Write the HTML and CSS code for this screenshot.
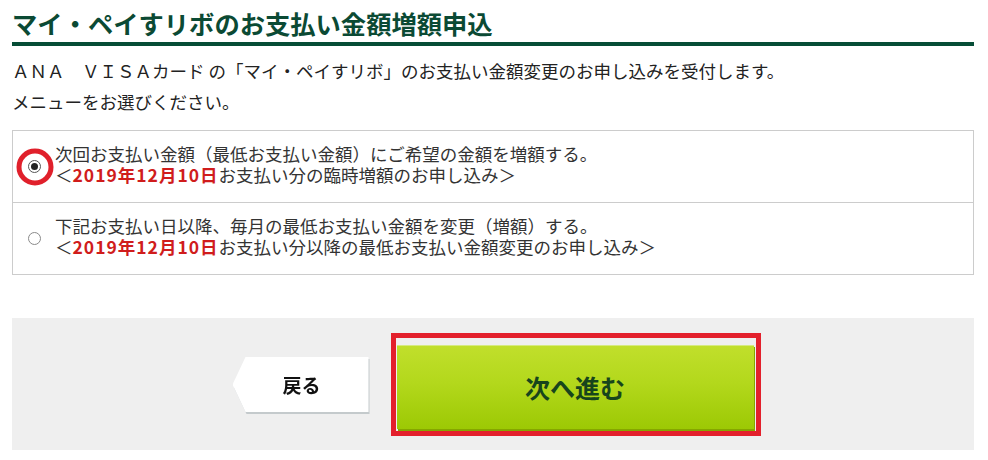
FILE: index.html
```html
<!DOCTYPE html>
<html lang="ja">
<head>
<meta charset="utf-8">
<title>マイ・ペイすリボのお支払い金額増額申込</title>
<link rel="stylesheet" href="styles.css">
</head>
<body>
<div class="page">
  <h1 class="title">マイ・ペイすリボのお支払い金額増額申込</h1>
  <p class="lead">ＡＮＡ　ＶＩＳＡカード の「マイ・ペイすリボ」のお支払い金額変更のお申し込みを受付します。</p>
  <p class="lead lead-menu">メニューをお選びください。</p>

  <div class="menu">
    <label class="opt">
      <span class="radio checked"><span class="ring"></span></span>
      <span class="opt-text">次回お支払い金額（最低お支払い金額）にご希望の金額を増額する。<br>＜<b class="date">2019年12月10日</b>お支払い分の臨時増額のお申し込み＞</span>
    </label>
    <label class="opt opt-second">
      <span class="radio"></span>
      <span class="opt-text">下記お支払い日以降、毎月の最低お支払い金額を変更（増額）する。<br>＜<b class="date">2019年12月10日</b>お支払い分以降の最低お支払い金額変更のお申し込み＞</span>
    </label>
  </div>

  <div class="actions">
    <div class="back-wrap"><a class="back">戻る</a></div>
    <div class="highlight"><a class="next">次へ進む</a></div>
  </div>
</div>
</body>
</html>
```
FILE: styles.css
```css
html, body {
  margin: 0;
  padding: 0;
  background: #fff;
}

body {
  font-family: "Noto Sans CJK JP", "Noto Sans", sans-serif;
  color: #333;
}

.page {
  width: 962px;
  margin-left: 12px;
}

.title {
  margin: 0;
  padding: 6px 0 2px;
  font-size: 25.3px;
  line-height: 34px;
  font-weight: 700;
  color: #0b4a34;
  border-bottom: 4px solid #064d36;
}

.lead {
  margin: 13px 0 0;
  font-size: 17.5px;
  line-height: 24px;
  color: #222;
}

.lead-menu {
  margin-top: 7px;
}

.menu {
  margin-top: 16px;
  border: 1px solid #cccccc;
}

.opt {
  display: flex;
  align-items: center;
  height: 71px;
  padding-left: 15px;
  gap: 14px;
}

.opt-second {
  border-top: 1px solid #cccccc;
}

.opt-text {
  font-size: 17.5px;
  line-height: 21px;
  color: #333;
  margin-top: -5px;
}

.date {
  color: #d01c1c;
  font-weight: 700;
  letter-spacing: 1px;
}

.radio {
  position: relative;
  flex: none;
  width: 13px;
  height: 13px;
  box-sizing: border-box;
  border: 1px solid #8a8a8a;
  border-radius: 50%;
  background: #fff;
}

.radio.checked {
  border-color: #555;
}

.radio.checked::after {
  content: "";
  position: absolute;
  left: 2px;
  top: 2px;
  width: 7px;
  height: 7px;
  border-radius: 50%;
  background: #222;
}

.ring {
  position: absolute;
  left: 50%;
  top: 50%;
  width: 37px;
  height: 37px;
  box-sizing: border-box;
  border: 5px solid #e0202b;
  border-radius: 50%;
  transform: translate(-50%, -50%);
}

.actions {
  margin-top: 43px;
  height: 132px;
  background: #efefef;
  display: flex;
  align-items: center;
  justify-content: center;
  gap: 22px;
  padding-left: 7px;
}

.back-wrap {
  filter: drop-shadow(1px 2px 0 #c4cacc);
  margin-top: 1px;
}

.back {
  display: flex;
  align-items: center;
  justify-content: center;
  width: 136px;
  height: 55px;
  background: #fff;
  clip-path: polygon(13px 0, 100% 0, 100% 100%, 13px 100%, 0 50%);
  font-size: 19px;
  font-weight: 700;
  color: #111;
  padding-left: 2px;
  box-sizing: border-box;
}

.highlight {
  border: 5px solid #e3202c;
  padding: 7px 1px 1px 1px;
  box-sizing: border-box;
  width: 370px;
  height: 103px;
}

.next {
  display: flex;
  align-items: center;
  justify-content: center;
  width: 357px;
  height: 84px;
  background: linear-gradient(to bottom, #c1df2c 0%, #b3d81c 45%, #9cc904 100%);
  box-shadow: inset 0 1px 0 #d6ea80, 1px 2px 0 #86a500;
  font-size: 25px;
  font-weight: 700;
  color: #17451c;
}
```
